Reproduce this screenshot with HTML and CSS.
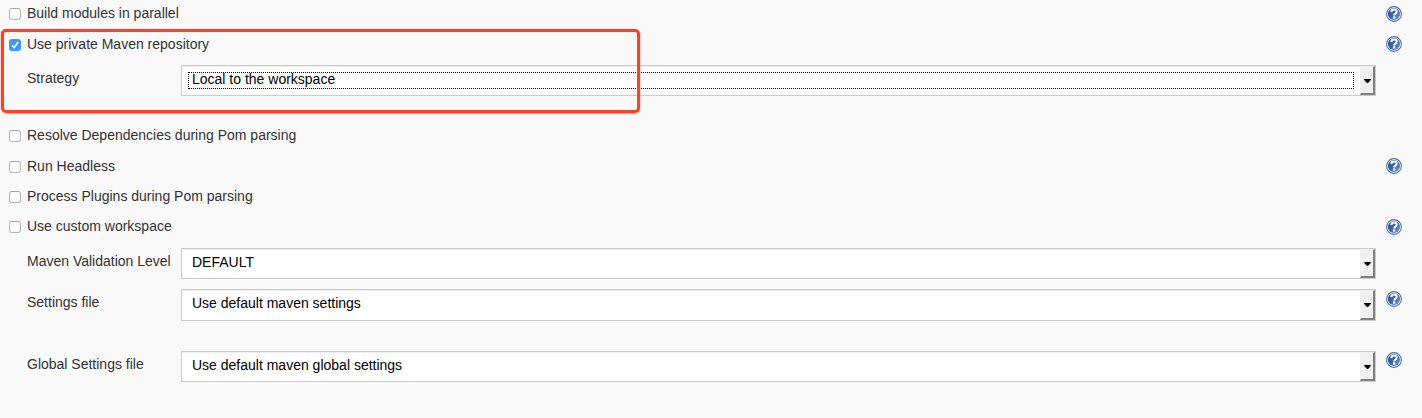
FILE: index.html
```
<!DOCTYPE html>
<html lang="en">
<head>
<meta charset="utf-8">
<title>Maven build options</title>
<link rel="stylesheet" href="styles.css">
</head>
<body>
<svg class="defs" width="0" height="0" aria-hidden="true">
  <defs>
    <linearGradient id="disc" x1="0" y1="0" x2="1" y2="1">
      <stop offset="0" stop-color="#1f4a8c"/>
      <stop offset=".5" stop-color="#3c66a6"/>
      <stop offset="1" stop-color="#84a6d3"/>
    </linearGradient>
    <symbol id="help" viewBox="0 0 16 16">
      <circle cx="8" cy="8" r="7.4" fill="#fff" stroke="#4a72ae" stroke-width="1.1"/>
      <circle cx="8" cy="8" r="6.1" fill="url(#disc)"/>
      <path d="M5.3 6.1C5.4 4.3 6.6 3.6 8.1 3.6c1.6 0 2.6.9 2.6 2.2 0 1.8-2.6 1.8-2.6 3.7" fill="none" stroke="#fff" stroke-width="2"/>
      <rect x="7" y="10.4" width="2.2" height="2.2" fill="#fff"/>
    </symbol>
  </defs>
</svg>
<form class="options">
  <div class="row r1"><span class="check"></span><span class="label">Build modules in parallel</span><svg class="help"><use href="#help"/></svg></div>
  <div class="row r2"><span class="check checked"><svg viewBox="0 0 12 12"><path d="M3 6.3l2.2 2.2L9.2 3.1" fill="none" stroke="#fff" stroke-width="1.7"/></svg></span><span class="label">Use private Maven repository</span><svg class="help"><use href="#help"/></svg></div>
  <div class="field f1"><span class="name">Strategy</span><div class="select"><span class="value focused">Local to the workspace</span><span class="arrow"><svg viewBox="0 0 7 4"><path d="M0 0h7v.8L4 4H3L0 .8z"/></svg></span></div></div>
  <div class="row r3"><span class="check"></span><span class="label">Resolve Dependencies during Pom parsing</span></div>
  <div class="row r4"><span class="check"></span><span class="label">Run Headless</span><svg class="help"><use href="#help"/></svg></div>
  <div class="row r5"><span class="check"></span><span class="label">Process Plugins during Pom parsing</span></div>
  <div class="row r6"><span class="check"></span><span class="label">Use custom workspace</span><svg class="help"><use href="#help"/></svg></div>
  <div class="field f2"><span class="name">Maven Validation Level</span><div class="select"><span class="value">DEFAULT</span><span class="arrow"><svg viewBox="0 0 7 4"><path d="M0 0h7v.8L4 4H3L0 .8z"/></svg></span></div></div>
  <div class="field f3"><span class="name">Settings file</span><div class="select"><span class="value">Use default maven settings</span><span class="arrow"><svg viewBox="0 0 7 4"><path d="M0 0h7v.8L4 4H3L0 .8z"/></svg></span></div><svg class="help"><use href="#help"/></svg></div>
  <div class="field f4"><span class="name">Global Settings file</span><div class="select"><span class="value">Use default maven global settings</span><span class="arrow"><svg viewBox="0 0 7 4"><path d="M0 0h7v.8L4 4H3L0 .8z"/></svg></span></div><svg class="help"><use href="#help"/></svg></div>
  <div class="highlight"></div>
</form>
</body>
</html>
```

FILE: styles.css
```
* { box-sizing: border-box; }
body {
  margin: 0;
  height: 418px;
  overflow: hidden;
  background: #f9f9f9;
  color: #333;
  font: 14px/16px "Liberation Sans", Arial, sans-serif;
}
.defs { position: absolute; }
.options { position: relative; display: flex; flex-direction: column; }
.row {
  display: flex;
  align-items: flex-start;
  height: 16px;
  padding: 0 20px 0 9px;
}
.r1 { margin-top: 6px; }
.r2 { margin-top: 14px; }
.r3 { margin-top: 32px; }
.r4 { margin-top: 15px; }
.r5 { margin-top: 14px; }
.r6 { margin-top: 14px; }
.check {
  width: 12px;
  height: 12px;
  margin: 2px 6px 0 0;
  border: 1px solid #b6b6b6;
  border-top-color: #a8a8a8;
  border-radius: 3px;
  background: #fff;
}
.r2 .check { margin-top: 3px; }
.check.checked { border: 0; background: #3b99fc; }
.check svg { display: block; width: 12px; height: 12px; }
.label { margin-top: -1px; white-space: nowrap; }
.r2 .label { margin-top: 0; }
.help { flex: none; width: 16px; height: 16px; margin-left: auto; }
.r4 .help { margin-top: -1px; }
.field {
  display: flex;
  align-items: flex-start;
  height: 31px;
  padding: 0 20px 0 27px;
}
.f1 { margin-top: 13px; }
.f2 { margin-top: 13px; }
.f3 { margin-top: 10px; height: 32px; }
.f4 { margin-top: 30px; }
.name { flex: none; width: 154px; padding-top: 5px; white-space: nowrap; }
.field .help { margin-top: 2px; }
.f4 .help { margin-top: 1px; }
.select {
  display: flex;
  width: 1195px;
  height: 100%;
  border: 1px solid #ccc;
  background: #fff;
  color: #000;
  box-shadow: inset 0 1px 1px #eee;
}
.value {
  flex: 1;
  height: 17px;
  margin: 6px;
  padding: 0 3px;
  border: 1px solid transparent;
  line-height: 12px;
}
.value.focused { border: 1px dotted #000; }
.arrow {
  display: flex;
  align-items: center;
  justify-content: center;
  width: 15px;
  border: solid #808080;
  border-width: 1px 2px 2px 1px;
  border-top-color: #f0f0f0;
  border-left-color: #f0f0f0;
  background: #f0f0f0;
}
.arrow svg { width: 7px; height: 4px; margin-top: 1px; }
.highlight {
  position: absolute;
  left: 1px;
  top: 29px;
  width: 639px;
  height: 84px;
  border: 3px solid #ff4026;
  border-radius: 5px;
  box-shadow: 0 0 0 .5px rgba(255, 64, 38, .4);
}
```
